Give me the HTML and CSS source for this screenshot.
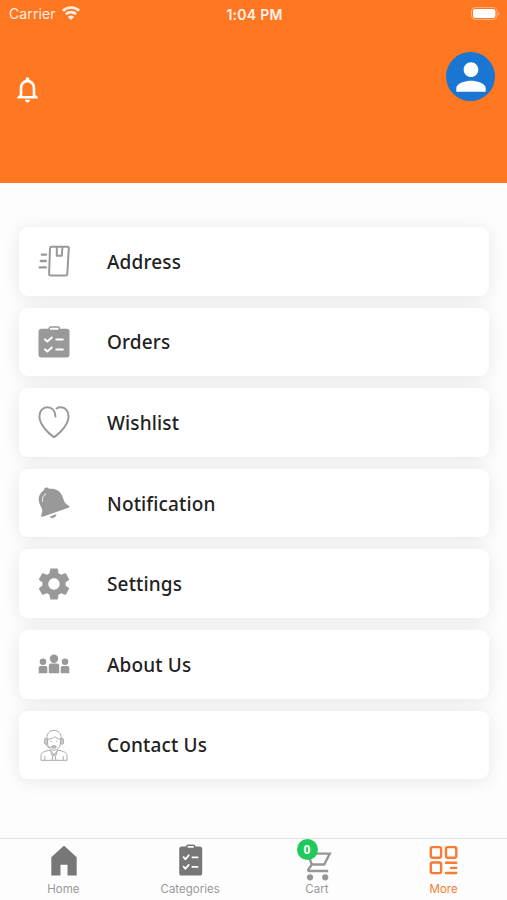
FILE: index.html
```
<!DOCTYPE html>
<html lang="en">
<head>
    <meta charset="UTF-8">
    <meta name="viewport" content="width=device-width, initial-scale=1.0">
    <title>More</title>
    <link rel="stylesheet" href="styles.css">
</head>
<body>

    <header class="header">
        <div class="status-bar">
            <div class="carrier">
                <span>Carrier</span>
                <svg width="18" height="14" viewBox="0 0 18 14" fill="none" stroke="#fff" stroke-width="2.7">
                    <path d="M.9 4.8a11.6 11.6 0 0 1 16.2 0"/>
                    <path d="M3.9 8.3a7.3 7.3 0 0 1 10.2 0"/>
                    <path d="M9 14L5.9 11a4.5 4.5 0 0 1 6.2 0z" fill="#fff" stroke="none"/>
                </svg>
            </div>
            <div class="time">1:04 PM</div>
            <div class="battery">
                <svg width="29" height="13" viewBox="0 0 29 13">
                    <rect x=".5" y=".5" width="25.5" height="12" rx="3.8" fill="none" stroke="#fff" stroke-opacity=".4"/>
                    <rect x="2" y="2" width="22.4" height="9" rx="2.2" fill="#fff"/>
                    <path d="M27.3 4.5c1.6.6 1.6 3.4 0 4z" fill="#fff" fill-opacity=".5"/>
                </svg>
            </div>
        </div>
        <div class="header-row">
            <svg class="header-bell" viewBox="0 0 24 24" fill="#fff">
                <path d="M12 22c1.1 0 2-.9 2-2h-4c0 1.1.9 2 2 2zm6-6v-5c0-3.07-1.63-5.64-4.5-6.32V4c0-.83-.67-1.5-1.5-1.5s-1.5.67-1.5 1.5v.68C7.64 5.36 6 7.92 6 11v5l-2 2v1h16v-1l-2-2zm-2 1H8v-6c0-2.48 1.51-4.5 4-4.5s4 2.02 4 4.5v6z"/>
            </svg>
            <div class="avatar">
                <svg width="44" height="44" viewBox="0 0 24 24" fill="#fff">
                    <path d="M12 12c2.21 0 4-1.79 4-4s-1.79-4-4-4-4 1.79-4 4 1.79 4 4 4zm0 2c-2.67 0-8 1.34-8 4v2h16v-2c0-2.66-5.33-4-8-4z"/>
                </svg>
            </div>
        </div>
    </header>

    <main class="menu">
        <div class="card">
            <svg class="card-icon" viewBox="0 0 32 32" fill="none" stroke="#999" stroke-width="2" stroke-linecap="round" stroke-linejoin="round">
                <path d="M13.4 1.8h16.2q1.3 0 1.2 1.4L29.3 28.9q-.1 1.500-1.400 1.500H12.500q-1.500 0-1.400-1.500L12 3.200Q12.100 1.800 13.400 1.800z"/>
                <path d="M18.800 2.200v8.600h5l.6-8.600"/>
                <path d="M3.800 9.600h4.200M2.800 16h5M1.800 22.400h6" stroke-width="2.400"/>
            </svg>
            <span>Address</span>
        </div>
        <div class="card">
            <svg class="card-icon" viewBox="0 0 32 32">
                <rect x=".5" y="2.8" width="31" height="28.700" rx="3" fill="#999"/>
                <rect x="11.200" y="1.100" width="10.200" height="3.400" rx="1.500" fill="#fff" stroke="#999" stroke-width="1.500"/>
                <path d="M7 13.400l2.400 2.200 4.400-4.100M7 23.400l2.400 2.200 4.400-4.100M18.300 13.400h6.500M18.300 23.400h6.500" fill="none" stroke="#fff" stroke-width="2" stroke-linecap="round" stroke-linejoin="round"/>
            </svg>
            <span>Orders</span>
        </div>
        <div class="card">
            <svg class="card-icon" viewBox="0 0 32 32" fill="none" stroke="#999" stroke-width="2" stroke-linecap="round" stroke-linejoin="round">
                <path d="M17.500 10.500C17.200 4.800 13.800 1.300 9.400 1.300 4.600 1.300 1.400 5.300 1.400 10.400c0 5.800 3.700 10.700 8.200 15.300 2.100 2.200 4.100 3.800 5.600 4.900q.8.600 1.600 0c1.500-1.100 3.600-2.800 5.700-4.900 4.500-4.600 8.100-9.500 8.100-15.300 0-5.100-3.100-9.100-8-9.100-1.600 0-2.900.4-4 1.200"/>
            </svg>
            <span>Wishlist</span>
        </div>
        <div class="card">
            <svg class="card-icon" viewBox="0 0 32 32">
                <path d="M5.800 2.900C6.200.8 8.100 0 9.700.7l1.500 1.100c5.600-.8 10.700 1.700 13 7 1.200 2.800 1.400 5.600 3.400 7.600l3.500 2.500q.9 1.100-.6 1.800L4.800 29.800q-1.800.5-1.600-1.200l1-4.200c.4-2.700-1.800-5.400-2.800-8.200C-.3 11.700 1 6.500 5.600 3.600z" fill="#999"/>
                <path d="M11.500 29.700l7-2.600c-.4 3.900-4.700 5.200-7 2.600z" fill="#999"/>
                <path d="M4.700 14.500c-.8-3 .2-5.700 3-7.500" fill="none" stroke="#fff" stroke-width="1" stroke-linecap="round"/>
            </svg>
            <span>Notification</span>
        </div>
        <div class="card">
            <svg class="card-icon" viewBox="2.1 2.1 19.8 19.8" fill="#999">
                <path d="M19.14 12.94c.04-.3.06-.61.06-.94 0-.32-.02-.64-.07-.94l2.03-1.58c.18-.14.23-.41.12-.61l-1.92-3.32c-.12-.22-.37-.29-.59-.22l-2.39.96c-.5-.38-1.03-.7-1.62-.94l-.36-2.54c-.04-.24-.24-.41-.48-.41h-3.84c-.24 0-.43.17-.47.41l-.36 2.54c-.59.24-1.13.57-1.62.94l-2.39-.96c-.22-.08-.47 0-.59.22L2.74 8.87c-.12.21-.08.47.12.61l2.03 1.58c-.05.3-.09.63-.09.94s.02.64.07.94l-2.03 1.58c-.18.14-.23.41-.12.61l1.92 3.32c.12.22.37.29.59.22l2.39-.96c.5.38 1.03.7 1.62.94l.36 2.54c.05.24.24.41.48.41h3.84c.24 0 .44-.17.47-.41l.36-2.54c.59-.24 1.13-.56 1.62-.94l2.39.96c.22.08.47 0 .59-.22l1.92-3.32c.12-.22.07-.47-.12-.61l-2.01-1.58zM12 15.5c-1.93 0-3.5-1.57-3.5-3.5s1.57-3.5 3.5-3.5 3.5 1.57 3.5 3.5-1.57 3.5-3.5 3.5z"/>
            </svg>
            <span>Settings</span>
        </div>
        <div class="card">
            <svg class="card-icon" viewBox="0 0 32 32" fill="#999">
                <circle cx="16" cy="10.7" r="4.200"/>
                <circle cx="5" cy="13.7" r="3.300"/>
                <circle cx="27" cy="13.7" r="3.300"/>
                <path d="M10.800 25.200v-7.700q0-2 2-2h6.400q2 0 2 2v7.700zM.7 25.200v-5.400q0-1.700 1.700-1.700h5.200q1.700 0 1.700 1.700v5.400zM22.700 25.200v-5.400q0-1.700 1.700-1.700h5.200q1.700 0 1.700 1.700v5.400z"/>
            </svg>
            <span>About Us</span>
        </div>
        <div class="card">
            <svg class="card-icon" viewBox="0 0 32 32" fill="none" stroke="#aaa" stroke-width="1" stroke-linejoin="round">
                <path d="M8.800 9.500C8.800 4.500 11.500 1.500 16 1.500s7.200 3 7.200 8M9.600 9.500v4.800c0 4 2.800 6.900 6.400 6.900s6.400-2.900 6.400-6.900V9.500"/>
                <path d="M9.600 10.300c2.800-.2 5.400-1 7.200-2.600 1.500 1.400 3.300 2.300 5.600 2.600"/>
                <rect x="6.600" y="9.300" width="2.800" height="6" rx="1.400" fill="#ccc"/>
                <rect x="22.600" y="9.300" width="2.800" height="6" rx="1.400" fill="#ccc"/>
                <path d="M8.200 15.300c.4 2.400 2.600 3.200 5 3.200M12.500 12.300h1.400M18.100 12.300h1.400"/>
                <rect x="13.600" y="16.800" width="4.600" height="2.200" rx="1.100" fill="#bbb"/>
                <path d="M3 31.300v-4.500c0-3.200 2.800-4.600 9.300-5.600l3.700 4.600 3.700-4.600c6.500 1 9.300 2.400 9.300 5.600v4.500zM6.800 27v4.300M25.200 27v4.300M12.600 21.400l1.400 5 2-1.500 2 1.500 1.400-5M15.200 25.800l-1 5.300M16.800 25.800l1 5.300"/>
            </svg>
            <span>Contact Us</span>
        </div>
    </main>

    <nav class="tabs">
        <div class="tab">
            <svg width="32" height="32" viewBox="0 0 32 32" fill="#777">
                <path d="M4.300 13.300L15.700 2.700q1.300-1.200 2.600 0l11.400 10.600v18.100h-9.200v-10.600h-7v10.600H4.300z"/>
            </svg>
            <span>Home</span>
        </div>
        <div class="tab">
            <svg width="32" height="32" viewBox="0 0 32 32">
                <rect x="5.200" y="2.600" width="23" height="29" rx="2.600" fill="#777"/>
                <rect x="12.700" y="1.200" width="8" height="3.400" rx="1.500" fill="#fff" stroke="#777" stroke-width="1.600"/>
                <path d="M9.600 13.200l1.900 2.100 3.200-3.900M9.600 22.700l1.900 2.100 3.200-3.900M18.400 13.400h5.200M18.400 22.900h5.200" fill="none" stroke="#fff" stroke-width="1.800" stroke-linecap="round" stroke-linejoin="round"/>
            </svg>
            <span>Categories</span>
        </div>
        <div class="tab tab-cart">
            <svg width="32" height="32" viewBox="0 0 32 32" fill="none" stroke="#969696" stroke-width="2.300">
                <path d="M6.500 5.600L10.800 17.500H23.200L28.800 6.600H9.500M10.800 17.500l-3.600 5.300q-.3 1.200 1 1.200h19"/>
                <circle cx="9" cy="30.300" r="3.100" fill="#969696" stroke="none"/>
                <circle cx="24.200" cy="30.300" r="3.100" fill="#969696" stroke="none"/>
            </svg>
            <div class="badge">0</div>
            <span>Cart</span>
        </div>
        <div class="tab active">
            <svg width="32" height="32" viewBox="0 0 32 32" fill="none" stroke="#f97b31" stroke-width="2.400" stroke-linecap="round">
                <rect x="2.800" y="3.100" width="10.300" height="10.600" rx="1.600"/>
                <rect x="18" y="3.100" width="10.300" height="10.600" rx="1.600"/>
                <rect x="2.800" y="18.500" width="10.300" height="10.600" rx="1.600"/>
                <path d="M18 18.800h10.200M23.200 23.900h5M18 29h10.200"/>
            </svg>
            <span>More</span>
        </div>
    </nav>

</body>
</html>
```
FILE: styles.css
```
* { box-sizing: border-box; }
body { margin: 0; height: 900px; display: flex; flex-direction: column; overflow: hidden; background: #fdfdfd; font-family: Inter, "Liberation Sans", sans-serif; }
svg { display: block; flex-shrink: 0; overflow: visible; }

.header { height: 183px; flex-shrink: 0; background: #ff7720; color: #fff; }
.status-bar { height: 28px; padding: 0 7px 0 9px; display: grid; grid-template-columns: 1fr auto 1fr; align-items: center; font-size: 14px; }
.carrier { display: flex; align-items: center; gap: 6px; opacity: 0.88; letter-spacing: 0.1px; margin-top: -1px; }
.carrier svg { margin-top: -2px; }
.time { font-size: 14px; font-weight: 600; letter-spacing: 0.25px; opacity: 0.92; }
.battery { display: flex; justify-content: flex-end; margin-top: -1px; }
.header-row { display: flex; justify-content: space-between; align-items: flex-start; padding: 24px 12px 0; }
.header-bell { width: 31px; height: 31px; margin-top: 22px; }
.avatar { width: 49px; height: 49px; border-radius: 50%; background: #1976d2; display: flex; justify-content: center; align-items: center; }

.menu { flex: 1; padding: 44px 18px 0 19px; display: flex; flex-direction: column; gap: 12px; }
.card { height: 68.6px; flex-shrink: 0; padding-left: 19px; display: flex; align-items: center; gap: 37px; background: #fff; border-radius: 9px; box-shadow: 0 2px 18px rgba(0,0,0,0.09); color: #222; font-family: "Noto Sans", sans-serif; font-size: 19px; font-weight: 500; letter-spacing: 0.15px; }
.card span { padding-top: 1px; }
.card-icon { width: 32px; height: 32px; }

.tabs { height: 62px; flex-shrink: 0; border-top: 1px solid #e2e2e2; background: #fdfdfd; display: grid; grid-template-columns: repeat(4, 1fr); }
.tab { position: relative; padding-top: 5px; display: flex; flex-direction: column; align-items: center; gap: 6px; color: #999; font-size: 11.5px; line-height: 14px; }
.tab.active { color: #f97b31; }
.tab-cart svg { margin-top: 2.5px; margin-bottom: -2.5px; }
.badge { position: absolute; left: 43px; top: 0; width: 21px; height: 21px; border-radius: 50%; background: #1fc95b; color: #fff; font-family: "Noto Sans", sans-serif; font-size: 12px; font-weight: 700; line-height: 21px; text-align: center; }
```
